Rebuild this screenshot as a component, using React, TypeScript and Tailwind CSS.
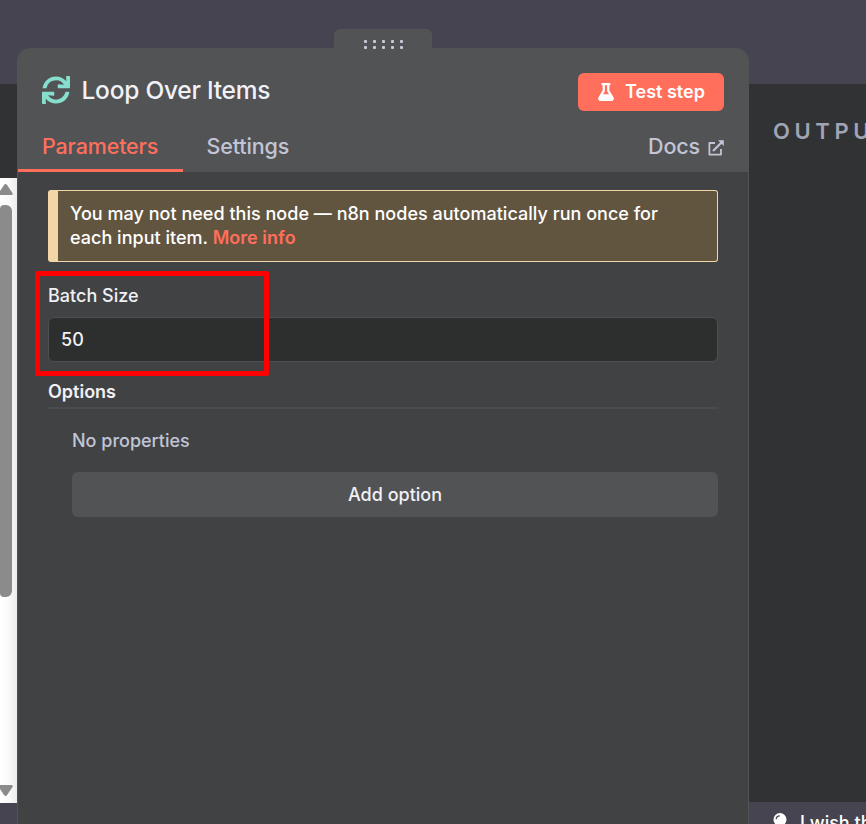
import { FaFlask, FaSync } from "react-icons/fa";

const HANDLE_DOTS = Array.from({ length: 10 }, (_, i) => i);

function DragHandle() {
  return (
    <div className="mx-auto mt-[29px] flex h-[19px] w-[98px] justify-center rounded-t-[6px] bg-[#525355] pt-[11px]">
      <div className="relative z-10 grid h-[9px] grid-cols-5 gap-x-[6px] gap-y-[3px]">
        {HANDLE_DOTS.map((dot) => (
          <span key={dot} className="size-[3px] rounded-[1px] bg-[#c8cad8]" />
        ))}
      </div>
    </div>
  );
}

function ExternalLinkIcon() {
  return (
    <svg
      viewBox="0 0 16 16"
      className="mt-[3px] size-4"
      fill="none"
      stroke="currentColor"
      strokeWidth="1.8"
      strokeLinejoin="round"
    >
      <path d="M7 3H1.4v11.6H13V9" />
      <path d="M5 11 14 2" strokeWidth="2.1" />
      <path d="M10 .2h5.8V6z" fill="currentColor" stroke="none" />
    </svg>
  );
}

function InputColumn() {
  return (
    <aside className="flex w-[17px] flex-none flex-col pt-[84px]">
      <div className="h-[94px] bg-[#313233]" />
      <div className="flex h-[625px] flex-col bg-linear-to-r from-white via-[#fafafa] to-[#ececec] pt-[6px] pb-[7px]">
        <svg viewBox="0 0 13 11" className="h-[11px] w-[13px]" fill="#8b8b8b">
          <path d="M5.5 0q.9 0 1.6 1l5.4 8q1 2-1 2H0V7L4 1q.6-1 1.5-1z" />
        </svg>
        <div className="mt-[10px] h-[392px] w-3 rounded-l-[4px] rounded-r-[6px] bg-[#8b8b8b]" />
        <svg viewBox="0 0 13 11" className="mt-auto h-[11px] w-[13px]" fill="#8b8b8b">
          <path d="M5.5 11q.9 0 1.6-1l5.4-8q1-2-1-2H0v4l4 6q.6 1 1.5 1z" />
        </svg>
      </div>
    </aside>
  );
}

function PanelHeader() {
  return (
    <header className="flex h-[124px] flex-col justify-between rounded-t-[12px] bg-[#525355]">
      <div className="flex items-center justify-between px-6 pt-[25px]">
        <div className="flex items-center gap-[11.5px] pb-[4px]">
          <FaSync className="-mt-px size-7 text-[#86decc]" />
          <h1 className="text-[24.5px] leading-8 font-medium tracking-[-0.25px] text-[#f1f1f6]">
            Loop Over Items
          </h1>
        </div>
        <button className="flex h-[38px] w-[146px] items-center justify-center gap-[10px] rounded-[6px] bg-[#ff6f5c] text-[18px] font-semibold text-white">
          <FaFlask className="size-[18px]" />
          <span className="pb-[2px]">Test step</span>
        </button>
      </div>
      <nav className="flex h-[48px] items-stretch text-[21.5px] leading-[44px] font-medium tracking-[-0.15px] text-[#c2c5d6]">
        <a className="w-[165px] border-b-[3px] border-[#ff6f5c] pl-6 text-[#ff6f5c]">Parameters</a>
        <a className="pl-[23.5px]">Settings</a>
        <a className="ml-auto flex h-[44px] items-center gap-2 pr-6">
          Docs
          <ExternalLinkIcon />
        </a>
      </nav>
    </header>
  );
}

function NodePanel() {
  return (
    <main className="flex w-[732px] flex-none flex-col">
      <DragHandle />
      <section className="flex flex-1 flex-col rounded-t-[12px] border-x border-[#525355] bg-[#414244]">
        <PanelHeader />
        <div className="px-[30px] pt-[18px] text-[18px] text-[#f0f0f5]">
          <div className="h-[72px] rounded-[3px] border border-l-[10px] border-[#f3d6a8] bg-[#625540] pt-[11px] pl-3 leading-6 font-medium tracking-[0.02px] text-white">
            You may not need this node — n8n nodes automatically run once for
            <br />
            each input item. <a className="font-semibold text-[#ff6f5c]">More info</a>
          </div>

          <div className="relative mt-[22px]">
            <label className="block leading-6 font-medium">Batch Size</label>
            <div className="mt-[9px] flex h-[45px] items-center rounded-[6px] border border-[#4e4f51] bg-[#2d2e2e] pl-3 font-medium">
              50
            </div>
            {/* Highlight around the batch size field */}
            <div className="absolute -top-[13px] -left-[13px] h-[105px] w-[234px] rounded-[2px] border-[5px] border-[#ff0000]" />
          </div>

          <h2 className="mt-[18px] h-[29px] border-b-2 border-[#4a4b4d] leading-6 font-semibold">
            Options
          </h2>
          <div className="pt-5 pl-6">
            <p className="leading-6 font-medium text-[#c2c5d6]">No properties</p>
            <button className="mt-[19px] h-[45px] w-full rounded-[6px] bg-[#525355] font-medium">
              Add option
            </button>
          </div>
        </div>
      </section>
    </main>
  );
}

function OutputColumn() {
  return (
    <aside className="flex w-[117px] flex-none flex-col overflow-hidden whitespace-nowrap">
      <div className="mt-[84px] h-[718px] flex-none bg-[#313233] pt-[32px] pl-6 text-[22px] leading-[30px] font-semibold tracking-[4.6px] text-[#a0a4b4]">
        OUTPUT
      </div>
      <div className="flex flex-none pt-[9px] pl-6 text-[18px] leading-6 font-medium text-white">
        <svg viewBox="0 0 14 20" className="mt-[2px] mr-[13px] h-5 w-[14px] flex-none">
          <path
            d="M7 0a6.5 6.5 0 0 1 6.5 6.5c0 3.5-3 5-3 8.5h-7c0-3.5-3-5-3-8.5A6.5 6.5 0 0 1 7 0z"
            fill="#fff"
          />
          <path d="M3.2 6.3a3.6 3.6 0 0 1 3.6-3.5" fill="none" stroke="#454450" strokeWidth="1.2" />
        </svg>
        I wish this node would...
      </div>
    </aside>
  );
}

export default function App() {
  return (
    <div className="flex h-[824px] w-[866px] overflow-hidden bg-[#454450] font-['Inter',sans-serif]">
      <InputColumn />
      <NodePanel />
      <OutputColumn />
    </div>
  );
}
